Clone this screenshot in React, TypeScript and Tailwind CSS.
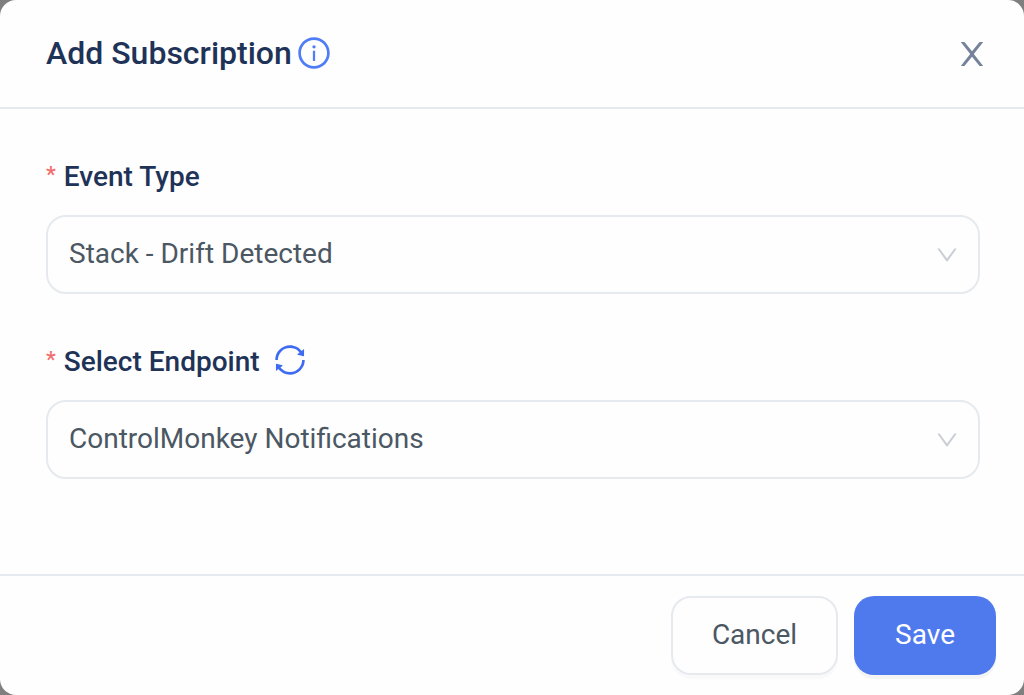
import { useState } from 'react'
import type { ReactNode } from 'react'
import { AiOutlineDown, AiOutlineInfoCircle, AiOutlineSync } from 'react-icons/ai'

const EVENT_TYPES = ['Stack - Drift Detected']
const ENDPOINTS = ['ControlMonkey Notifications']

const CloseIcon = () => (
    <svg viewBox="0 0 24 26" className="h-[26px] w-6" fill="currentColor" aria-hidden="true">
        <path d="M.8.9h3.6L12 10.3 19.6.9h3.6L13.8 13l9.4 12.1h-3.6L12 15.7 4.4 25.1H.8L10.2 13z" />
    </svg>
)

type SelectFieldProps = {
    id: string
    label: string
    options: string[]
    action?: ReactNode
}

const SelectField = ({ id, label, options, action }: SelectFieldProps) => {
    const [value, setValue] = useState(options[0])

    return (
        <div>
            <div className="flex h-11 items-center">
                <label htmlFor={id} className="flex items-center text-[28px] leading-11 font-medium text-[#1f3358]">
                    <span className="mr-2 text-[22px] leading-10 self-start font-medium text-[#f26d6d]">*</span>
                    {label}
                </label>
                {action}
            </div>
            <div className="relative mt-4">
                <select
                    id={id}
                    value={value}
                    onChange={(e) => setValue(e.target.value)}
                    className="h-[79px] w-full appearance-none rounded-[20px] border-2 border-[#e6eaef] bg-[#fefefe] px-[21px] pb-0.5 text-[28px] text-[#4b5863]"
                >
                    {options.map((option) => (
                        <option key={option}>{option}</option>
                    ))}
                </select>
                <AiOutlineDown className="pointer-events-none absolute top-1/2 right-5 size-[26px] -translate-y-1/2 text-[#cbcfd5]" />
            </div>
        </div>
    )
}

export default function App() {
    return (
        <div className="min-h-screen bg-[#7f7f7f] font-['Roboto',sans-serif]">
            <div
                role="dialog"
                aria-labelledby="dialog-title"
                className="flex min-h-screen flex-col rounded-2xl bg-[#fefefe]"
            >
                <header className="flex h-[109px] items-center justify-between border-b-2 border-[#e6eaef] pr-10 pl-[46px]">
                    <div className="flex items-center gap-1 pb-0.5 text-[#4f7cf7]">
                        <h2 id="dialog-title" className="text-[32px] leading-10 font-medium text-[#1f3358]">
                            Add Subscription
                        </h2>
                        <AiOutlineInfoCircle className="size-9" />
                    </div>
                    <button type="button" aria-label="Close" className="text-[#74839a]">
                        <CloseIcon />
                    </button>
                </header>

                <main className="flex flex-1 flex-col gap-[46px] pt-[46px] pr-11 pl-[46px]">
                    <SelectField id="event-type" label="Event Type" options={EVENT_TYPES} />
                    <SelectField
                        id="endpoint"
                        label="Select Endpoint"
                        options={ENDPOINTS}
                        action={
                            <button type="button" aria-label="Refresh endpoints" className="ml-3 pb-1 text-[#3f6bf2]">
                                <AiOutlineSync className="size-9" />
                            </button>
                        }
                    />
                </main>

                <footer className="flex justify-end gap-4 border-t-2 border-[#e6eaef] px-7 py-5 text-[28px]">
                    <button
                        type="button"
                        className="h-[79px] rounded-[20px] border-2 border-[#e6eaef] px-[39px] pb-0.5 text-[#4b5863] shadow-[0_4px_0_rgba(0,0,0,0.02)]"
                    >
                        Cancel
                    </button>
                    <button
                        type="button"
                        className="h-[79px] rounded-[20px] bg-[#4f7aee] px-[41px] pb-0.5 text-white shadow-[0_4px_0_rgba(0,0,0,0.04)]"
                    >
                        Save
                    </button>
                </footer>
            </div>
        </div>
    )
}
